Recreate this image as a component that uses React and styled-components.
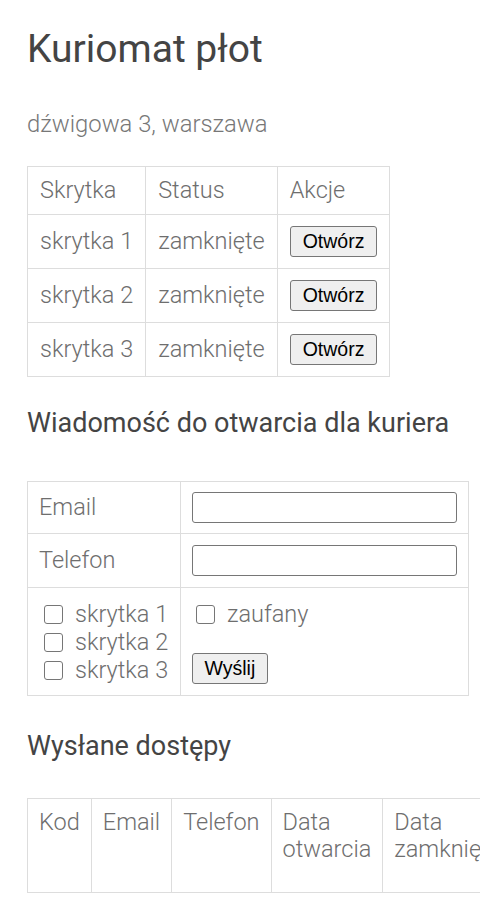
import React from 'react';
import styled, { createGlobalStyle } from 'styled-components';

const GlobalStyle = createGlobalStyle`
html, body {
    margin: 0;
    padding: 0;
    background: #fff;
    overflow-x: hidden;
}
body {
    font-family: Roboto, "Noto Sans", sans-serif;
    font-weight: 300;
    color: #6e6e6e;
}
`

const Page = styled.div`
padding: 26px 0 0 27px;
`

const Title = styled.h1`
margin: 0;
font-size: 39px;
line-height: 46px;
font-weight: 400;
color: #444;
`

const Address = styled.p`
margin: 39px 0 0;
font-size: 23.8px;
line-height: 27px;
color: #777;
`

const Heading = styled.h2`
margin: ${props => props.top}px 0 0;
font-size: 27px;
line-height: 32px;
font-weight: 400;
color: #444;
`

const Table = styled.table`
border-collapse: collapse;
margin-top: ${props => props.top}px;
font-size: 23.5px;
line-height: 27px;
font-weight: 300;
color: #6e6e6e;
width: ${props => props.wide ? '442px' : 'auto'};
`

const Cell = styled.td`
border: 1px solid #ddd;
padding: ${props => props.pad || '10px 11px'};
text-align: left;
vertical-align: ${props => props.top ? 'top' : 'middle'};
font-weight: 300;
width: ${props => props.w || 'auto'};
`

const HeadCell = styled(Cell).attrs({ as: 'th' })``

const Button = styled.button`
display: inline-block;
vertical-align: middle;
font-family: "Liberation Sans", Arial, sans-serif;
font-size: 19.5px;
color: #000;
background: #efefef;
border: 1px solid #767676;
border-radius: 3px;
padding: ${props => props.pad || '4px 12px'};
margin: 0;
line-height: 21px;
`

const TextInput = styled.input`
display: block;
box-sizing: border-box;
width: 265px;
height: 31px;
border: 1.5px solid #767676;
border-radius: 3px;
margin: 0;
padding: 2px 6px;
`

const CheckList = styled.div`
display: flex;
flex-direction: column;
`

const CheckRow = styled.label`
display: flex;
align-items: center;
gap: 12px;
height: 28px;
padding-left: ${props => props.indent}px;
white-space: nowrap;
`

const Box = styled.span`
width: 19px;
height: 19px;
border: 1.5px solid #767676;
border-radius: 3px;
box-sizing: border-box;
flex-shrink: 0;
`

const Stack = styled.div`
display: flex;
flex-direction: column;
align-items: flex-start;
gap: 25px;
`

const lockers = ['skrytka 1', 'skrytka 2', 'skrytka 3'];
const accessCols = ['Kod', 'Email', 'Telefon', 'Data otwarcia', 'Data zamknięcia', 'Skrytki', 'Akcje'];

export default function App() {
    return <>
        <GlobalStyle />
        <Page>
            <Title>Kuriomat płot</Title>
            <Address>dźwigowa 3, warszawa</Address>

            <Table top={28}>
                <thead>
                    <tr>
                        <HeadCell pad="10px 12px">Skrytka</HeadCell>
                        <HeadCell pad="10px 12px">Status</HeadCell>
                        <HeadCell pad="10px 12px">Akcje</HeadCell>
                    </tr>
                </thead>
                <tbody>
                    {lockers.map(l => <tr key={l}>
                        <Cell pad="11px 12px">{l}</Cell>
                        <Cell pad="11px 12px">zamknięte</Cell>
                        <Cell pad="11px 12px"><Button>Otwórz</Button></Cell>
                    </tr>)}
                </tbody>
            </Table>

            <Heading top={30}>Wiadomość do otwarcia dla kuriera</Heading>

            <Table top={42} wide>
                <tbody>
                    <tr>
                        <Cell w="131px">Email</Cell>
                        <Cell><TextInput type="text" /></Cell>
                    </tr>
                    <tr>
                        <Cell pad="11px 11px">Telefon</Cell>
                        <Cell pad="11px 11px"><TextInput type="tel" /></Cell>
                    </tr>
                    <tr>
                        <Cell top pad="12px 11px 11px">
                            <CheckList>
                                {lockers.map(l => <CheckRow key={l} indent={5}><Box />{l}</CheckRow>)}
                            </CheckList>
                        </Cell>
                        <Cell top pad="12px 11px 11px">
                            <Stack>
                                <CheckRow indent={4}><Box />zaufany</CheckRow>
                                <Button pad="4px 11.5px">Wyślij</Button>
                            </Stack>
                        </Cell>
                    </tr>
                </tbody>
            </Table>

            <Heading top={34}>Wysłane dostępy</Heading>

            <Table top={36}>
                <thead>
                    <tr>
                        {accessCols.map(c => <HeadCell key={c} top pad="10px 11px 29px">{c}</HeadCell>)}
                    </tr>
                </thead>
            </Table>
        </Page>
    </>
}
